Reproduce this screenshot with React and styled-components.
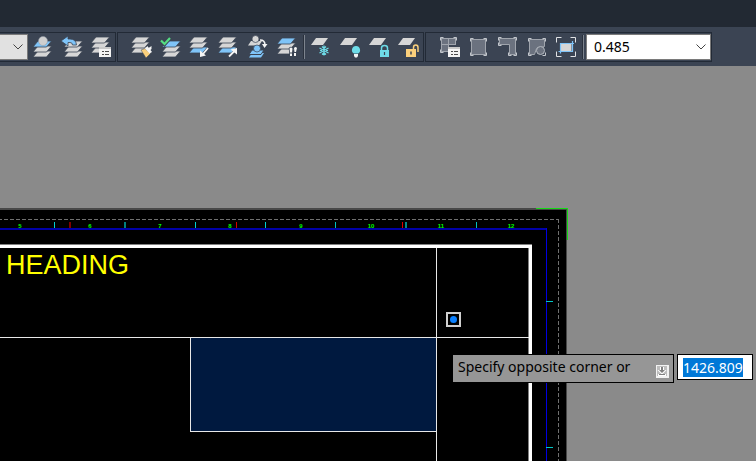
import React, { useEffect, useRef } from "react";
import styled, { createGlobalStyle } from "styled-components";

const GREY = "#d6d6d6";
const BLUE = "#7fc4f8";
const BAR = "#3b4453";
const CYAN = "#6edce8";
const YELLOW = "#fbd07c";

const GlobalStyle = createGlobalStyle`
  * {
    box-sizing: border-box;
  }

  body {
    margin: 0;
    background: #8a8a8a;
    font-family: "Noto Sans", "Open Sans", sans-serif;
    font-size: 14px;
  }
`;

/* ---------- icon parts ---------- */

const Sheet = ({ x, y, fill = GREY }) => (
  <path
    d={`M${x + 5} ${y}h13.500l-5 6h-13.500z`}
    fill={fill}
    stroke={BAR}
    strokeWidth="0.8"
  />
);

const Stack = ({ x = 4, y = 2, fills = [] }) => (
  <>
    <Sheet x={x} y={y + 10} fill={fills[2]} />
    <Sheet x={x} y={y + 5} fill={fills[1]} />
    <Sheet x={x} y={y} fill={fills[0]} />
  </>
);

const Panel = ({ x, y }) => (
  <>
    <rect x={x} y={y} width="12" height="10" fill="#f4f4f4" />
    <rect x={x} y={y} width="12" height="2" fill="#c9c9c9" />
    <path
      d={`M${x + 3} ${y + 4.5}h2M${x + 6} ${y + 4.5}h4M${x + 3} ${y + 7.5}h2M${x + 6} ${y + 7.5}h4`}
      stroke="#4c4c4c"
      strokeWidth="1"
    />
  </>
);

const Plane = () => <path d="M9 3h12l-5 7H4z" fill={GREY} />;

const Corners = ({ x, y, w, h, l = 3, color = "#c3c7cd" }) => (
  <path
    d={`M${x} ${y + l}v${-l}h${l}M${x + w - l} ${y}h${l}v${l}M${x + w} ${y + h - l}v${l}h${-l}M${x + l} ${y + h}h${-l}v${-l}`}
    fill="none"
    stroke={color}
    strokeWidth="1"
  />
);

const shape = { fill: "#6b727f", stroke: "#a0a5ad", strokeWidth: 1 };

const icons = {
  current: (
    <>
      <Stack x={5} y={6} fills={[BLUE]} />
      <circle cx="15" cy="6" r="4.5" fill="#cfcfcf" stroke="#8f98a5" strokeWidth="0.5" />
    </>
  ),
  previous: (
    <>
      <Stack x={7} y={6} />
      <path
        d="M4 6l7-5v3h2q6 0 6.500 6h-4q0-2.500-2.500-2.500h-2v3.500z"
        fill={BLUE}
        stroke={BAR}
        strokeWidth="0.8"
      />
    </>
  ),
  states: (
    <>
      <Stack x={5} />
      <Panel x={13} y={12} />
    </>
  ),
  match: (
    <>
      <Stack x={5} />
      <path d="M15 15l4-1.500 5.500 5-4.500 4.500z" fill={YELLOW} stroke={BAR} strokeWidth="0.5" />
      <path d="M19 13.500l2.500-2.500 1 2 3-2v3l-1 1 1.500 2-2.500 1.500z" fill="#f5f5f5" />
    </>
  ),
  makeCurrent: (
    <>
      <Stack x={7} y={6} fills={[BLUE]} />
      <path d="M6 5.500l3.500 3.500 5.500-6" fill="none" stroke={BAR} strokeWidth="4" />
      <path d="M6 5.500l3.500 3.500 5.500-6" fill="none" stroke="#55dd82" strokeWidth="2.2" />
    </>
  ),
  copy: (
    <>
      <Stack x={5} fills={[GREY, GREY, BLUE]} />
      <path d="M24 13l-5 6" stroke="#f5f5f5" strokeWidth="1.8" />
      <path d="M16 22v-6.500l6 5z" fill="#f5f5f5" />
    </>
  ),
  move: (
    <>
      <Stack x={5} fills={[GREY, GREY, BLUE]} />
      <path d="M16 21.500l6-6" stroke="#f5f5f5" strokeWidth="1.8" />
      <path d="M24 13v6.500l-6.500-5z" fill="#f5f5f5" />
    </>
  ),
  isolate: (
    <>
      <path d="M9 6h11l-3 4.500H6z" fill={GREY} />
      <circle cx="13.500" cy="4" r="3.500" fill={GREY} stroke={BAR} strokeWidth="0.7" />
      <path d="M18 5q5 0 5 5" fill="none" stroke="#f5f5f5" strokeWidth="1.500" />
      <path d="M20 9h5.500l-3 4z" fill="#f5f5f5" />
      <path d="M10 18h12l-3 4.500H7z" fill={BLUE} />
      <path d="M10 15h12l-3 4.500H7z" fill={BLUE} stroke={BAR} strokeWidth="1" />
      <circle cx="15" cy="13.500" r="3.500" fill={BLUE} stroke={BAR} strokeWidth="0.7" />
    </>
  ),
  walk: (
    <>
      <Stack x={6} y={3} fills={[BLUE]} />
      <path
        d="M18.500 13.500q1.500-2 3 0l-.5 4h-2zM23 13q1.500-2 3 0l-1 4h-1.500zM19 18.500h2v2.500h-2zM23 18h2v3h-2z"
        fill="#f5f5f5"
        stroke={BAR}
        strokeWidth="1.6"
        paintOrder="stroke"
      />
    </>
  ),
  freeze: (
    <>
      <Plane />
      <path
        d="M17 10.500v10M12.500 13l9 5M12.500 18l9-5M15 11.500l2 2 2-2M15 19.500l2-2 2 2M13 15.500h2M19 15.500h2"
        fill="none"
        stroke={CYAN}
        strokeWidth="1.2"
      />
    </>
  ),
  off: (
    <>
      <Plane />
      <path d="M20 11a4 4 0 0 1 2 7.500h-4a4 4 0 0 1 2-7.500z" fill={CYAN} />
      <path d="M18 19h4v2l-1 1.500h-2L18 21z" fill="#f5f5f5" />
    </>
  ),
  lock: (
    <>
      <Plane />
      <path d="M16.500 16v-3q0-2.500 3-2.500t3 2.500v3" fill="none" stroke={CYAN} strokeWidth="1.500" />
      <rect x="15" y="15" width="9" height="7" fill={CYAN} />
      <path d="M19.500 17v3" stroke={BAR} strokeWidth="1.200" />
    </>
  ),
  unlock: (
    <>
      <Plane />
      <path d="M19.500 15v-2.500q0-2.500 2.250-2.500t2.250 2.500V17" fill="none" stroke={YELLOW} strokeWidth="1.500" />
      <rect x="12" y="14" width="10" height="8" fill={YELLOW} />
      <path d="M17 16.500v3" stroke={BAR} strokeWidth="1.500" />
    </>
  ),
  viewports: (
    <>
      <rect x="7.500" y="3.500" width="7" height="6" {...shape} />
      <rect x="14.500" y="3.500" width="7" height="6" {...shape} />
      <rect x="7.500" y="9.500" width="7" height="7" {...shape} />
      <Corners x={6.5} y={2.5} w={16} h={15} />
      <Panel x={14} y={12} />
    </>
  ),
  single: (
    <>
      <rect x="8.500" y="4.500" width="14" height="15" {...shape} />
      <Corners x={7.5} y={3.5} w={16} h={17} />
    </>
  ),
  polygonal: (
    <>
      <path d="M7.500 3.500h16v16h-6v-10h-10z" {...shape} />
      <path
        d="M6.500 5.500v-3h3M21.500 2.500h3v3M24.500 17.500v3h-3M19.500 20.500h-3v-3M9.500 10.500h-3v-3"
        fill="none"
        stroke="#c3c7cd"
      />
    </>
  ),
  object: (
    <>
      <path d="M8.500 4.500h15v7l-8 2-2 6h-5z" {...shape} />
      <Corners x={7.5} y={3.5} w={17} h={17} />
      <circle cx="19.500" cy="15.500" r="4" {...shape} stroke="#b4b9c0" />
    </>
  ),
  clip: (
    <>
      <Corners x={6.5} y={2.5} w={19} h={19} l={5} color="#e0e2e5" />
      <path d="M10.500 8.500h11v8h-11z" fill={GREY} />
      <path d="M22.500 6v10.500H8.500M10.500 18.500V8.500h13.500" fill="none" stroke={BLUE} strokeWidth="1.200" />
    </>
  ),
};

const layerTools = [
  ["current", "Make object's layer current"],
  ["previous", "Layer previous"],
  ["states", "Layer states manager"],
];

const editTools = [
  ["match", "Layer match"],
  ["makeCurrent", "Change to current layer"],
  ["copy", "Copy objects to new layer"],
  ["move", "Move objects to layer"],
  ["isolate", "Layer isolate"],
  ["walk", "Layer walk"],
];

const stateTools = [
  ["freeze", "Layer freeze"],
  ["off", "Layer off"],
  ["lock", "Layer lock"],
  ["unlock", "Layer unlock"],
];

const viewportTools = [
  ["viewports", "Viewports dialog"],
  ["single", "Single viewport"],
  ["polygonal", "Polygonal viewport"],
  ["object", "Convert object to viewport"],
  ["clip", "Clip existing viewport"],
];

const Tools = ({ items }) =>
  items.map(([icon, label]) => (
    <ToolButton key={icon} type="button" aria-label={label}>
      <svg width="29" height="24" viewBox="0 0 29 24">
        {icons[icon]}
      </svg>
    </ToolButton>
  ));

const Combo = ({ label, options, grow, muted }) => (
  <ComboBox $grow={grow} $muted={muted}>
    <ComboSelect aria-label={label}>
      {options.map((o) => (
        <option key={o}>{o}</option>
      ))}
    </ComboSelect>
    <Chevron width="10" height="6" viewBox="0 0 10 6">
      <path d="M.5.5L5 5 9.500.5" fill="none" stroke="#444" strokeWidth="1" />
    </Chevron>
  </ComboBox>
);

/* ---------- drawing ---------- */

const rulerTicks = [
  [54, 1, "#00d0d0"],
  [69, 2, "#800000"],
  [124, 2, "#008080"],
  [195, 1, "#00d0d0"],
  [236, 1, "#d80000"],
  [265, 1, "#00d0d0"],
  [335, 1, "#00c0c0"],
  [402, 1, "#e00000"],
  [405, 2, "#008a8a"],
  [476, 1, "#00c0c0"],
];

const rulerNumbers = [
  [20, "5"],
  [90, "6"],
  [160, "7"],
  [230, "8"],
  [301, "9"],
  [371, "10"],
  [441, "11"],
  [511, "12"],
];

const Drawing = () => (
  <Sketch shapeRendering="crispEdges">
    {/* paper */}
    <rect x="-5" y="142" width="572" height="2000" fill="#484848" />
    <rect x="-5" y="144" width="571" height="2000" fill="#000" />
    <rect x="536" y="142" width="32" height="1" fill="#18d818" />
    <rect x="567" y="142" width="1" height="32" fill="#18d818" />
    <path d="M-2 153.500H558" stroke="#707070" strokeDasharray="4 2" />
    <path d="M558.500 153V2000" stroke="#707070" strokeDasharray="4 2" />

    {/* ruler */}
    {rulerTicks.map(([x, w, fill]) => (
      <rect key={x} x={x} y="156" width={w} height="7" fill={fill} />
    ))}
    {rulerNumbers.map(([x, n]) => (
      <RulerNumber key={n} x={x} y="162">
        {n}
      </RulerNumber>
    ))}
    <path d="M0 163H547" stroke="#0000a8" strokeWidth="2" />
    <path d="M546.500 162V2000" stroke="#0000e0" />
    <rect x="546" y="235" width="7" height="1" fill="#00c8c8" />
    <rect x="546" y="381" width="7" height="1" fill="#00c8c8" />

    {/* title block */}
    <path d="M0 180H530V2000" fill="none" stroke="#808080" strokeWidth="4" />
    <path d="M0 180.500H530.500V2000" fill="none" stroke="#fff" strokeWidth="3" />
    <rect x="190.500" y="271.500" width="246" height="94" fill="#00193f" stroke="#e8e8e8" />
    <path d="M436.500 182V2000M0 271.500H529" stroke="#e8e8e8" />
    <Heading x="6" y="208">
      HEADING
    </Heading>

    {/* pick box */}
    <rect x="447" y="247" width="13" height="13" fill="#000" stroke="#d0d0d0" strokeWidth="2" />
    <circle cx="453.500" cy="253.500" r="3.500" fill="#0a80ff" shapeRendering="auto" />
  </Sketch>
);

const App = () => {
  const valueRef = useRef(null);

  useEffect(() => {
    valueRef.current.focus();
    valueRef.current.select();
  }, []);

  return (
    <Page>
      <GlobalStyle />
      <TitleStrip />
      <Toolbar>
        <Group>
          <Combo label="Layer" options={[""]} muted />
          <Tools items={layerTools} />
        </Group>
        <Group $inset>
          <Tools items={editTools} />
          <Separator />
          <Tools items={stateTools} />
        </Group>
        <Group $inset>
          <Tools items={viewportTools} />
          <Separator />
          <Combo label="Viewport scale" options={["0.485", "1"]} grow />
        </Group>
      </Toolbar>
      <Canvas>
        <Drawing />
        <Prompt>
          <PromptLabel htmlFor="corner">
            Specify opposite corner or
            <MoreButton type="button" aria-label="More options">
              <svg width="13" height="13" viewBox="0 0 13 13">
                <rect width="13" height="13" fill="#f2f2f2" />
                <rect x="1" y="1" width="10" height="10" fill="#bdbdbd" />
                <path d="M4 2h4v3h2.500L6 9.500 1.500 5H4zM2 9h8v2H2z" fill="#fff" />
                <path d="M5 2h2v3h2L6 8 3 5h2zM3 9h6v1H3z" fill="#808080" />
              </svg>
            </MoreButton>
          </PromptLabel>
          <PromptInput id="corner" ref={valueRef} defaultValue="1426.809" />
        </Prompt>
      </Canvas>
    </Page>
  );
};

export default App;

const Page = styled.div`
  display: flex;
  flex-direction: column;
  min-height: 100vh;
  overflow: hidden;
`;

const TitleStrip = styled.div`
  height: 27px;
  background: #222933;
`;

const Toolbar = styled.div`
  display: flex;
  align-items: center;
  gap: 1px;
  height: 39px;
  background: ${BAR};
`;

const Group = styled.div`
  display: flex;
  align-items: center;
  height: 30px;
  padding-left: ${({ $inset }) => ($inset ? "8px" : "0")};
  border: 1px solid #222a36;
  border-left-width: ${({ $inset }) => ($inset ? "1px" : "0")};
`;

const ToolButton = styled.button`
  display: flex;
  width: 29px;
  height: 24px;
  padding: 0;
  border: 0;
  background: none;

  &:hover {
    background: #4c5768;
  }
`;

const Separator = styled.div`
  width: 2px;
  height: 24px;
  margin: 0 2px 0 3px;
  border-left: 1px solid #2a313d;
  border-right: 1px solid #7d848e;
`;

const ComboBox = styled.div`
  position: relative;
  width: ${({ $grow }) => ($grow ? "125px" : "28px")};
  height: 26px;
  border: 1px solid #7a7a7a;
  border-left-width: ${({ $muted }) => ($muted ? "0" : "1px")};
  background: ${({ $muted }) => ($muted ? "#e1e1e1" : "#fff")};
`;

const ComboSelect = styled.select`
  appearance: none;
  width: 100%;
  height: 100%;
  padding: 0 20px 0 7px;
  border: 0;
  background: transparent;
  color: #000;
  font: inherit;
`;

const Chevron = styled.svg`
  position: absolute;
  right: 4px;
  top: 9px;
  pointer-events: none;
`;

const Canvas = styled.div`
  position: relative;
  flex: 1;
  background: #8a8a8a;
`;

const Sketch = styled.svg`
  position: absolute;
  width: 100%;
  height: 100%;
`;

const RulerNumber = styled.text`
  fill: #00ff00;
  font: bold 6px "Liberation Sans", sans-serif;
  text-anchor: middle;
`;

const Heading = styled.text`
  fill: #ffff00;
  font: 27px "Liberation Sans", sans-serif;
`;

/* floats over the drawing, next to the pick box */
const Prompt = styled.div`
  position: absolute;
  left: 452px;
  top: 288px;
  display: flex;
  align-items: flex-start;
  gap: 3px;
`;

const PromptLabel = styled.label`
  display: flex;
  align-items: center;
  justify-content: space-between;
  width: 222px;
  height: 29px;
  padding: 0 4px 4px 5px;
  border: 1px solid #000;
  background: #969696;
  color: #000;
  white-space: nowrap;
`;

const MoreButton = styled.button`
  display: flex;
  align-self: flex-end;
  padding: 0;
  border: 0;
  background: none;
`;

const PromptInput = styled.input`
  width: 76px;
  height: 26px;
  padding: 0 5px;
  border: 1px solid #000;
  outline: 0;
  background: #fff;
  color: #000;
  font: inherit;

  &::selection {
    background: #0078d7;
    color: #fff;
  }
`;
